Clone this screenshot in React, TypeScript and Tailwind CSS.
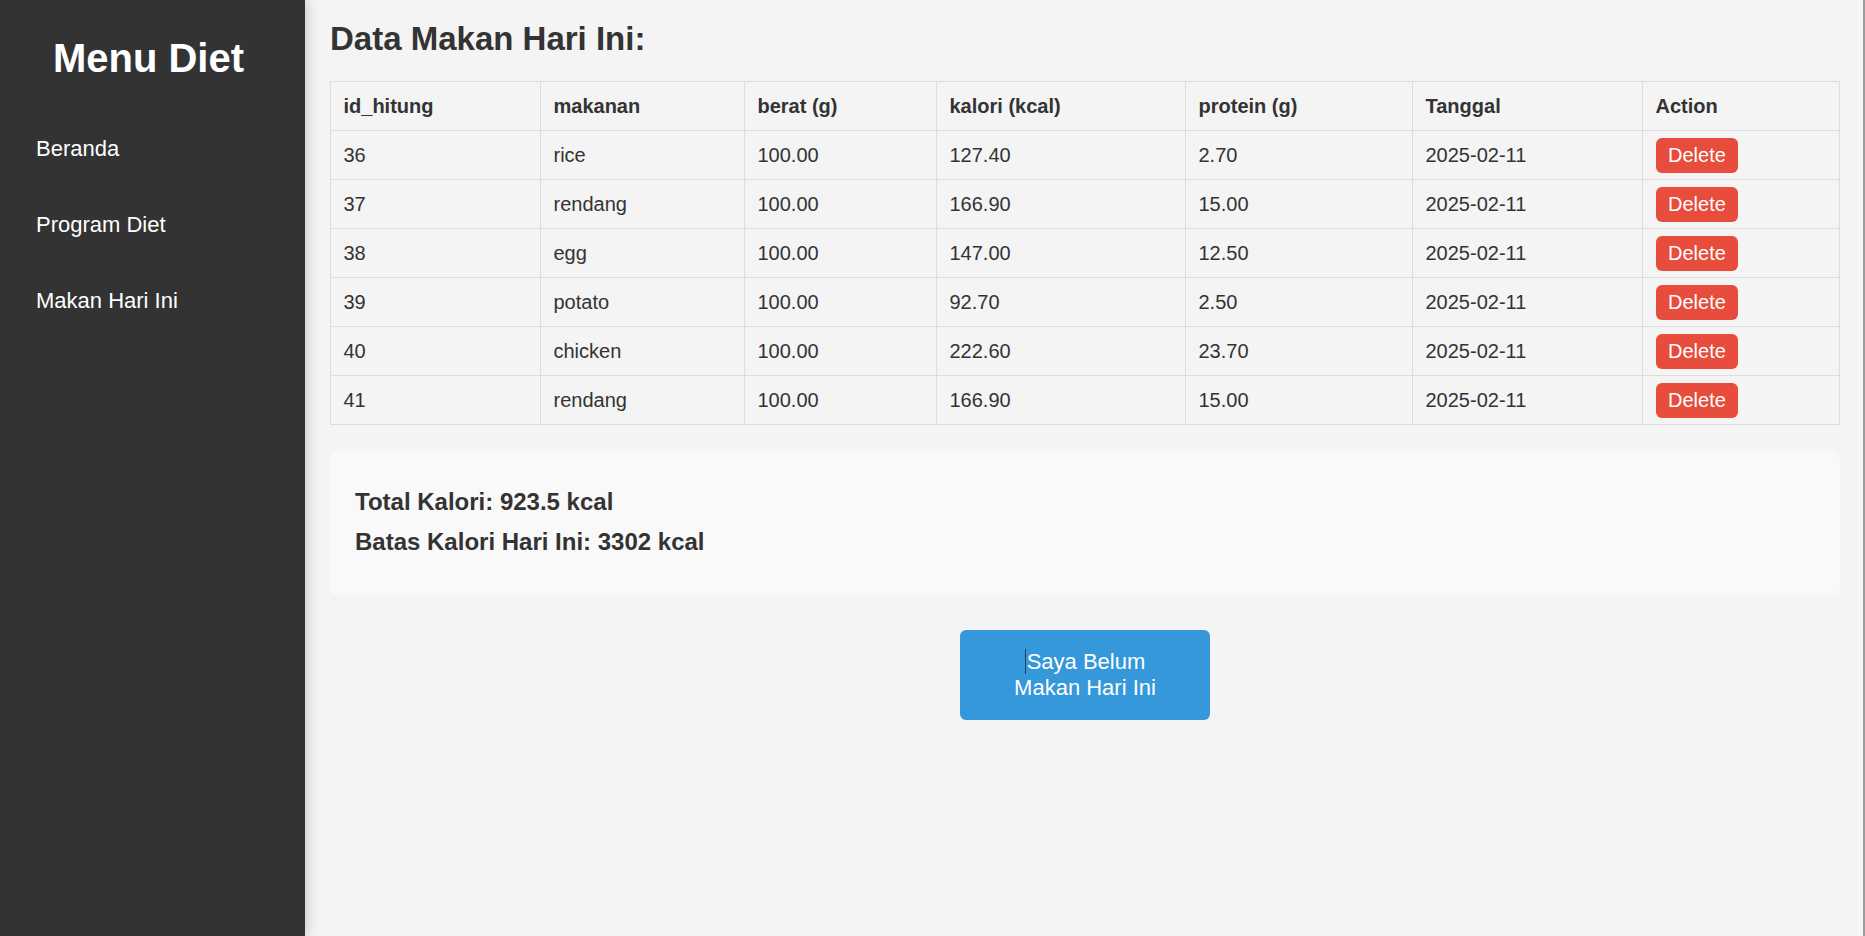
import React from "react";

const navItems = ["Beranda", "Program Diet", "Makan Hari Ini"];

const columns = [
  { label: "id_hitung", width: "w-[210px]" },
  { label: "makanan", width: "w-[204px]" },
  { label: "berat (g)", width: "w-[192px]" },
  { label: "kalori (kcal)", width: "w-[249px]" },
  { label: "protein (g)", width: "w-[227px]" },
  { label: "Tanggal", width: "w-[230px]" },
  { label: "Action", width: "w-[197px]" },
];

const mealRows = [
  { id: 36, food: "rice", weight: "100.00", kcal: "127.40", protein: "2.70", date: "2025-02-11" },
  { id: 37, food: "rendang", weight: "100.00", kcal: "166.90", protein: "15.00", date: "2025-02-11" },
  { id: 38, food: "egg", weight: "100.00", kcal: "147.00", protein: "12.50", date: "2025-02-11" },
  { id: 39, food: "potato", weight: "100.00", kcal: "92.70", protein: "2.50", date: "2025-02-11" },
  { id: 40, food: "chicken", weight: "100.00", kcal: "222.60", protein: "23.70", date: "2025-02-11" },
  { id: 41, food: "rendang", weight: "100.00", kcal: "166.90", protein: "15.00", date: "2025-02-11" },
];

export default function App() {
  return (
    <div className="flex h-screen w-full bg-[#f4f4f4] text-[#333] font-['Liberation_Sans',Arial,sans-serif]">
      {/* Sidebar */}
      <aside className="relative z-10 w-[305px] shrink-0 bg-[#333] pt-[35px] shadow-[2px_0_12px_rgba(0,0,0,0.18)]">
        <h1 className="pr-[8px] text-center text-[40px] leading-[46px] font-bold text-white">Menu Diet</h1>
        <nav className="mt-[30px] flex flex-col">
          {navItems.map((item) => (
            <a key={item} href="#" className="block px-[36px] py-[25.4px] text-[22px] leading-[25.2px] text-white">
              {item}
            </a>
          ))}
        </nav>
      </aside>

      {/* Main content */}
      <main className="flex-1 min-w-0 px-[25px] pt-[20px] shadow-[inset_-2px_0_0_#9c9c9c]">
        <h2 className="text-[33px] leading-[38px] font-bold">Data Makan Hari Ini:</h2>

        <table className="mt-[23px] w-full table-fixed border-collapse text-left text-[20px] leading-[23px]">
          <thead>
            <tr>
              {columns.map((col) => (
                <th key={col.label} className={`${col.width} h-[49px] border border-[#ddd] px-[12.5px] py-0 align-middle font-bold`}>
                  {col.label}
                </th>
              ))}
            </tr>
          </thead>
          <tbody>
            {mealRows.map((row) => (
              <tr key={row.id}>
                <td className="h-[49px] border border-[#ddd] px-[12.5px] py-0 align-middle">{row.id}</td>
                <td className="h-[49px] border border-[#ddd] px-[12.5px] py-0 align-middle">{row.food}</td>
                <td className="h-[49px] border border-[#ddd] px-[12.5px] py-0 align-middle">{row.weight}</td>
                <td className="h-[49px] border border-[#ddd] px-[12.5px] py-0 align-middle">{row.kcal}</td>
                <td className="h-[49px] border border-[#ddd] px-[12.5px] py-0 align-middle">{row.protein}</td>
                <td className="h-[49px] border border-[#ddd] px-[12.5px] py-0 align-middle">{row.date}</td>
                <td className="h-[49px] border border-[#ddd] px-[12.5px] py-0 align-middle">
                  <button className="block h-[35px] rounded-[6px] bg-[#e74c3c] px-[12.5px] text-[20px] leading-[23px] text-white">
                    Delete
                  </button>
                </td>
              </tr>
            ))}
          </tbody>
        </table>

        {/* Summary */}
        <div className="mt-[26px] rounded-[7px] bg-[#f9f9f9] px-[25px] pt-[37px] pb-[40px] text-[24px] leading-[27px] font-bold">
          <p>Total Kalori: 923.5 kcal</p>
          <p className="mt-[13px]">Batas Kalori Hari Ini: 3302 kcal</p>
        </div>

        <div className="mt-[35px] flex justify-center">
          <button className="flex h-[90px] w-[250px] items-center justify-center rounded-[6px] bg-[#3498db] text-center text-[22px] leading-[26px] text-white">
            <span>
              <span className="mr-[1px] inline-block h-[25px] w-px bg-[#2b3a4a] align-[-5px]" />
              Saya Belum
              <br />
              Makan Hari Ini
            </span>
          </button>
        </div>
      </main>
    </div>
  );
}
